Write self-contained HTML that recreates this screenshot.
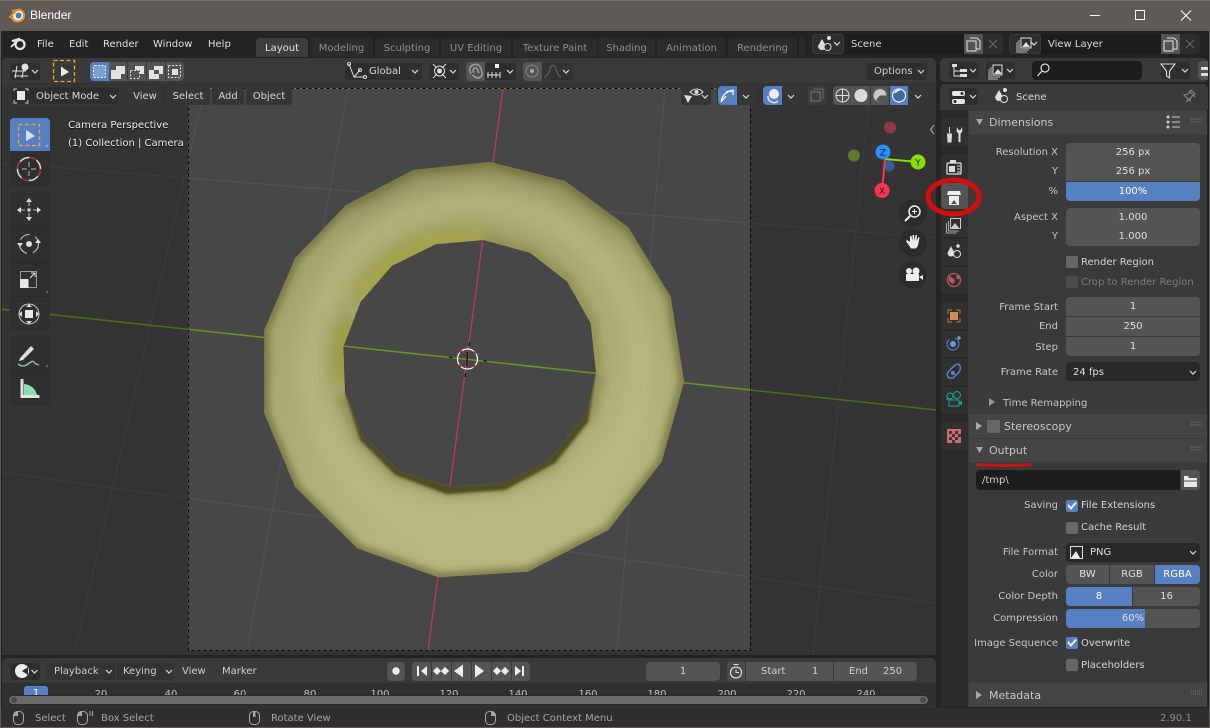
<!DOCTYPE html>
<html><head><meta charset="utf-8"><title>Blender</title>
<style>
html,body{margin:0;padding:0;background:#232323}
#r{position:relative;width:1210px;height:728px;overflow:hidden;background:#232323;font:10px/21px "DejaVu Sans",sans-serif;color:#d0d0d0}
#r div{position:absolute;white-space:nowrap;box-sizing:border-box}
svg{position:absolute;left:0;top:0}
.b{background:#2e2e2e;border-radius:4px;box-shadow:inset 0 0 0 1px #3a3a3a}
.g{background:#545454}
.blue{background:#5680c2;color:#fff}
.f{background:#545454;text-align:center;color:#e0e0e0;left:1066px;width:134px;height:19px}
.l{text-align:right;width:100px;left:958px;color:#c8c8c8}
.cb{left:1066px;width:12px;height:12px;background:#666;border-radius:2px}
.cl{left:1081px;color:#d4d4d4}
.tab{background:#2b2b2b;text-align:center;color:#8e8e8e;top:38px;height:19px;line-height:22px;border-radius:4px 4px 0 0}
.m{color:#e0e0e0}
.h{background:#363636;border-radius:3px;text-align:center;color:#d8d8d8;height:19px;top:86px;line-height:22px}
.s{top:708px;color:#a6a6a6;height:19px;line-height:21px}
.n{top:688px;color:#c0c0c0;line-height:14px;width:40px;text-align:center}
.ph{left:969px;width:238px;background:#444}
.pt{left:989px;color:#c8c8c8;font-size:11px;line-height:19px}
.tl{background:#2f2f2f;left:10px;width:40px}
.sep{left:10px;width:40px;height:1px;background:#282828}
.k{line-height:20px}
</style></head><body><div id="r">

<!-- title bar -->
<div style="left:0;top:0;width:1210px;height:31px;background:#5f5a55"></div>
<div style="left:0;top:0;width:1210px;height:1px;background:#767069"></div>
<div style="left:30px;top:6px;font:12px/19px 'Liberation Sans',sans-serif;color:#fff">Blender</div>

<!-- frame -->
<div style="left:0;top:31px;width:1px;height:697px;background:#5f5a55"></div>
<div style="left:1209px;top:31px;width:1px;height:697px;background:#5f5a55"></div>
<div style="left:0;top:727px;width:1210px;height:1px;background:#5f5a55"></div>

<!-- topbar -->
<div class="m" style="left:37px;top:34px">File</div>
<div class="m" style="left:69px;top:34px">Edit</div>
<div class="m" style="left:103px;top:34px">Render</div>
<div class="m" style="left:153px;top:34px">Window</div>
<div class="m" style="left:208px;top:34px">Help</div>
<div class="tab" style="left:256px;width:52px;background:#3d3d3d;color:#e4e4e4">Layout</div>
<div class="tab" style="left:310px;width:63px">Modeling</div>
<div class="tab" style="left:375px;width:64px">Sculpting</div>
<div class="tab" style="left:441px;width:70px">UV Editing</div>
<div class="tab" style="left:513px;width:84px">Texture Paint</div>
<div class="tab" style="left:598px;width:57px">Shading</div>
<div class="tab" style="left:657px;width:69px">Animation</div>
<div class="tab" style="left:728px;width:69px">Rendering</div>
<div class="tab" style="left:799px;width:6px"></div>

<div class="b" style="left:812px;top:34px;width:32px;height:20px"></div>
<div style="left:844px;top:34px;width:120px;height:20px;background:#1d1d1d;color:#d8d8d8;padding-left:7px;line-height:22px">Scene</div>
<div class="g" style="left:964px;top:34px;width:19px;height:20px"></div>
<div style="left:983px;top:34px;width:20px;height:20px;background:#2c2c2c;border-radius:0 4px 4px 0"></div>
<div class="b" style="left:1009px;top:34px;width:32px;height:20px"></div>
<div style="left:1041px;top:34px;width:120px;height:20px;background:#1d1d1d;color:#d8d8d8;padding-left:7px;line-height:22px">View Layer</div>
<div class="g" style="left:1161px;top:34px;width:19px;height:20px"></div>
<div style="left:1180px;top:34px;width:20px;height:20px;background:#2c2c2c;border-radius:0 4px 4px 0"></div>

<!-- viewport -->
<svg width="1210" height="728" style="z-index:0">
<defs>
<clipPath id="vp"><path d="M6 58H930a6 6 0 0 1 6 6V655H2V62a4 4 0 0 1 4-4z"/></clipPath>
<clipPath id="ring"><path clip-rule="evenodd" d="M490 162L565 181L628.3 227.3L670.7 296.7L684 381.7L661.7 461.7L608.3 530L527.7 571.7L438.3 577.3L357.3 548.3L295 486.7L264.3 413.3L264.3 330L295 258.3L346 205L413.3 170ZM483.3 240L530 252.7L567.3 281.7L590.7 323.3L596 371.7L588 410L550 460L501.7 483.3L450.7 486.7L400 471.7L363.3 436.7L345 393.3L343.3 346.7L360.7 301.7L391.7 266L435.7 244.3Z"/></clipPath>
<filter id="b2" filterUnits="userSpaceOnUse" x="200" y="100" width="560" height="560"><feGaussianBlur stdDeviation="1.2"/></filter>
<filter id="b5" filterUnits="userSpaceOnUse" x="200" y="100" width="560" height="560"><feGaussianBlur stdDeviation="4"/></filter>
<filter id="b10" filterUnits="userSpaceOnUse" x="200" y="100" width="560" height="560"><feGaussianBlur stdDeviation="11"/></filter>
<linearGradient id="tg" x1="0.35" y1="0" x2="0.6" y2="1"><stop offset="0" stop-color="#9f9f6b"/><stop offset=".5" stop-color="#abab75"/><stop offset="1" stop-color="#bbbb84"/></linearGradient>
</defs>
<g clip-path="url(#vp)">
<rect x="0" y="58" width="936" height="600" fill="#474747"/>
<g stroke="#535353" stroke-width="1" fill="none">
<path d="M348 88L247 651"/><path d="M205 88L75 651"/><path d="M665 88L617 651"/><path d="M870 88L813 655"/>
<path d="M0 163L936 238"/><path d="M0 472L936 603"/>
</g>
<path d="M0 309L936 410" stroke="#6f9322" stroke-width="1.500" fill="none"/>
<path d="M503 88L428 651" stroke="#b03c58" stroke-width="1.500" fill="none"/>
<path fill-rule="evenodd" d="M0 58H936V660H0ZM188 88V651H750V88Z" fill="#000" fill-opacity=".26"/>
<path d="M188 88.5H750" stroke="#77754a" stroke-width="1"/>
<rect x="188.5" y="88.5" width="562" height="562" fill="none" stroke="#000" stroke-width="1" stroke-dasharray="3 3"/>
<g clip-path="url(#ring)">
<rect x="250" y="150" width="450" height="440" fill="url(#tg)"/>
<path d="M346 205L413 170L490 162L565 181L628 227" fill="none" stroke="#80804e" stroke-width="20" filter="url(#b10)" opacity=".7"/>
<circle cx="476" cy="368" r="165" fill="none" stroke="#bcbc86" stroke-width="22" filter="url(#b10)" opacity=".8"/>
<path d="M350 322Q344 350 346 385" stroke="#94942a" stroke-width="22" fill="none" filter="url(#b10)" opacity=".9"/>
<path d="M360 300Q400 240 483 240" stroke="#a3a330" stroke-width="20" fill="none" filter="url(#b10)" opacity=".85"/>
<path d="M483 240L530 252.7L567.3 281.7L590.7 323.3L596 371.7" stroke="#8c8c4c" stroke-width="14" fill="none" filter="url(#b5)" opacity=".7"/>
<path d="M490 162L565 181L628.3 227.3L670.7 296.7L684 381.7L661.7 461.7L608.3 530L527.7 571.7L438.3 577.3L357.3 548.3L295 486.7L264.3 413.3L264.3 330L295 258.3L346 205L413.3 170Z" fill="none" stroke="#6c6c38" stroke-width="9" filter="url(#b5)" opacity=".85"/>
<path d="M345 393L363 437L400 472L451 487L502 483L550 460L588 410L596 372" fill="none" stroke="#85854a" stroke-width="20" filter="url(#b5)" opacity=".6"/>
<path d="M596 371.7L588.3 421.7L555 463.3L505 490L446.7 494.3L395 475L360 440L345 393.3L400 440L500 470L580 400Z" fill="#4e4e25" filter="url(#b2)"/>
</g>
<!-- 3D cursor -->
<circle cx="467.5" cy="359" r="10" fill="none" stroke="#fff" stroke-width="1.200"/>
<circle cx="467.5" cy="359" r="10" fill="none" stroke="#e0202a" stroke-width="1.400" stroke-dasharray="3 12.700" stroke-dashoffset="9"/>
<path d="M469.500 342L469 346M467.500 352L466.700 366M465.500 373L465 377M449 357.300L452.500 357.700M483.500 360.800L487 361.200" stroke="#000" stroke-width="1"/>
</g>
</svg>

<!-- viewport tool header -->
<div style="left:2px;top:58px;width:934px;height:25px;background:#3a3a3a;border-radius:5px 5px 0 0;z-index:1"></div>
<div style="z-index:2;left:0;top:0;width:1210px;height:728px">
<div class="b" style="left:9px;top:62px;width:32px;height:19px"></div>
<div class="blue" style="left:90px;top:62px;width:19px;height:19px;border-radius:4px 0 0 4px"></div>
<div class="g" style="left:109px;top:62px;width:18px;height:19px"></div>
<div class="g" style="left:128px;top:62px;width:18px;height:19px"></div>
<div class="g" style="left:147px;top:62px;width:18px;height:19px"></div>
<div class="g" style="left:166px;top:62px;width:18px;height:19px;border-radius:0 4px 4px 0"></div>
<div class="b k" style="left:344px;top:62px;width:79px;height:19px;padding-left:25px;color:#d8d8d8">Global</div>
<div class="b" style="left:428px;top:62px;width:32px;height:19px"></div>
<div class="b" style="left:466px;top:62px;width:51px;height:19px"></div>
<div class="g" style="left:466px;top:62px;width:19px;height:19px;border-radius:4px 0 0 4px"></div>
<div class="b" style="left:523px;top:62px;width:51px;height:19px;opacity:.6"></div>
<div class="g" style="left:523px;top:62px;width:19px;height:19px;border-radius:4px 0 0 4px"></div>
<div class="b k" style="left:866px;top:62px;width:62px;height:19px;padding-left:8px;color:#d0d0d0">Options</div>

<div class="b" style="left:10px;top:86px;width:110px;height:19px;padding-left:26px;color:#d8d8d8;line-height:22px">Object Mode</div>
<div class="h" style="left:127px;width:36px">View</div>
<div class="h" style="left:166px;width:44px">Select</div>
<div class="h" style="left:212px;width:32px">Add</div>
<div class="h" style="left:246px;width:46px">Object</div>
<div class="h" style="left:681px;width:30px"></div>
<div class="h" style="left:717px;width:40px"></div>
<div class="blue" style="left:718px;top:86px;width:19px;height:19px;border-radius:4px 0 0 4px"></div>
<div class="h" style="left:763px;width:39px"></div>
<div class="blue" style="left:763px;top:86px;width:19px;height:19px;border-radius:4px 0 0 4px"></div>
<div class="h" style="left:808px;width:18px;background:#3d3d3d"></div>
<div style="left:833px;top:86px;width:19px;height:19px;background:#545454;border-radius:4px 0 0 4px"></div>
<div class="g" style="left:852px;top:86px;width:18px;height:19px"></div>
<div class="g" style="left:871px;top:86px;width:18px;height:19px"></div>
<div class="blue" style="left:890px;top:86px;width:18px;height:19px"></div>
<div class="h" style="left:909px;width:19px;border-radius:0 4px 4px 0"></div>

<div style="left:68px;top:115px;color:#f0f0f0;text-shadow:0 1px 1px #000">Camera Perspective</div>
<div style="left:68px;top:133px;color:#f0f0f0;text-shadow:0 1px 1px #000">(1) Collection | Camera</div>

<!-- toolbar -->
<div style="left:10px;top:118px;width:40px;height:33px;background:#5680c2;border-radius:4px 4px 0 0"></div>
<div class="tl" style="top:151px;height:35px;border-radius:0 0 4px 4px"></div>
<div class="tl" style="top:193px;height:137px;border-radius:4px"></div>
<div class="tl" style="top:337px;height:69px;border-radius:4px"></div>
<div class="sep" style="top:227px"></div>
<div class="sep" style="top:262px"></div>
<div class="sep" style="top:296px"></div>
<div class="sep" style="top:371px"></div>

<!-- timeline -->
<div style="left:2px;top:658px;width:934px;height:25px;background:#3a3a3a;border-radius:5px 5px 0 0"></div>
<div style="left:2px;top:683px;width:934px;height:25px;background:#303030;overflow:hidden"></div>
<div class="b" style="left:9px;top:662px;width:32px;height:19px"></div>
<div class="b k" style="left:46px;top:662px;width:70px;height:19px;padding-left:8px;border-radius:4px 0 0 4px;background:#333">Playback</div>
<div class="b k" style="left:116px;top:662px;width:59px;height:19px;padding-left:7px;border-radius:0 4px 4px 0;background:#333">Keying</div>
<div class="k" style="left:182px;top:662px">View</div>
<div class="k" style="left:222px;top:662px">Marker</div>
<div class="g" style="left:387px;top:662px;width:18px;height:19px;border-radius:4px"></div>
<div class="g" style="left:412px;top:662px;width:118px;height:19px;border-radius:4px"></div>
<div class="k" style="left:646px;top:662px;width:74px;height:19px;background:#545454;border-radius:4px;text-align:center">1</div>
<div class="g" style="left:727px;top:662px;width:18px;height:19px;border-radius:4px 0 0 4px;background:#4a4a4a"></div>
<div class="g k" style="left:746px;top:662px;width:87px;height:19px;padding-left:15px">Start<span style="position:absolute;left:66px">1</span></div>
<div class="g k" style="left:834px;top:662px;width:83px;height:19px;padding-left:15px;border-radius:0 4px 4px 0">End<span style="position:absolute;left:49px">250</span></div>

<div style="left:24px;top:686px;width:24px;height:10px;background:#5680c2;border-radius:3px 3px 0 0;color:#fff;text-align:center;line-height:16px;overflow:hidden">1</div>
<div class="n" style="left:81px">20</div><div class="n" style="left:151px">40</div><div class="n" style="left:220px">60</div><div class="n" style="left:290px">80</div><div class="n" style="left:360px">100</div><div class="n" style="left:429px">120</div><div class="n" style="left:498px">140</div><div class="n" style="left:568px">160</div><div class="n" style="left:637px">180</div><div class="n" style="left:707px">200</div><div class="n" style="left:776px">220</div><div class="n" style="left:846px">240</div>
<div style="left:2px;top:695px;width:934px;height:13px;background:#303030"></div>
<div style="left:9px;top:696px;width:919px;height:8px;background:#6a6a6a;border-radius:5px;box-shadow:0 0 0 1px #2a2a2a"></div>
<div style="left:11px;top:697px;width:6px;height:6px;background:#4a4a4a;border-radius:50%"></div>
<div style="left:920px;top:697px;width:6px;height:6px;background:#4a4a4a;border-radius:50%"></div>

<!-- status -->
<div style="left:1px;top:708px;width:1208px;height:19px;background:#2e2e2e"></div>
<div class="s" style="left:35px">Select</div>
<div class="s" style="left:101px">Box Select</div>
<div class="s" style="left:271px">Rotate View</div>
<div class="s" style="left:507px">Object Context Menu</div>
<div class="s" style="left:1160px;color:#8f8f8f">2.90.1</div>

<!-- outliner header -->
<div style="left:940px;top:58px;width:268px;height:24px;background:#3a3a3a;border-radius:5px"></div>
<div class="b" style="left:948px;top:61px;width:31px;height:19px"></div>
<div class="b" style="left:985px;top:61px;width:31px;height:19px"></div>
<div style="left:1032px;top:61px;width:110px;height:19px;background:#1d1d1d;border-radius:4px"></div>
<div class="b" style="left:1160px;top:61px;width:31px;height:19px"></div>
<div style="left:1198px;top:61px;width:10px;height:19px;background:#545454;border-radius:4px 0 0 4px"></div>

<!-- properties -->
<div style="left:940px;top:84px;width:268px;height:26px;background:#3a3a3a;border-radius:5px 5px 0 0"></div>
<div class="b" style="left:948px;top:87px;width:31px;height:19px"></div>
<div style="left:1016px;top:87px;color:#d8d8d8">Scene</div>
<div style="left:941px;top:110px;width:27px;height:597px;background:#2a2a2a"></div>
<div style="left:968px;top:110px;width:239px;height:597px;background:#3a3a3a"></div>

<div class="ph" style="top:111px;height:23px"></div>
<div class="ph" style="top:414px;height:24px"></div>
<div class="ph" style="top:439px;height:23px"></div>
<div class="ph" style="top:683px;height:24px"></div>

<div class="pt" style="top:113px">Dimensions</div>
<div class="l" style="top:142px">Resolution X</div>
<div class="l" style="top:161px">Y</div>
<div class="l" style="top:181px">%</div>
<div class="f" style="top:143px;border-radius:4px 4px 0 0;line-height:20px">256 px</div>
<div class="f" style="top:162px;line-height:20px">256 px</div>
<div class="f blue" style="top:182px;border-radius:0 0 4px 4px;color:#fff;background:#5680c2;line-height:20px">100%</div>
<div class="l" style="top:207px">Aspect X</div>
<div class="l" style="top:226px">Y</div>
<div class="f" style="top:208px;border-radius:4px 4px 0 0;line-height:20px">1.000</div>
<div class="f" style="top:227px;border-radius:0 0 4px 4px;line-height:20px">1.000</div>
<div class="cb" style="top:256px"></div><div class="cl" style="top:252px">Render Region</div>
<div class="cb" style="top:276px;background:#4c4c4c"></div><div class="cl" style="top:272px;color:#7d7d7d">Crop to Render Region</div>
<div class="l" style="top:297px">Frame Start</div>
<div class="l" style="top:316px">End</div>
<div class="l" style="top:337px">Step</div>
<div class="f" style="top:297px;border-radius:4px 4px 0 0;line-height:20px">1</div>
<div class="f" style="top:316.500px;line-height:20px">250</div>
<div class="f" style="top:337px;border-radius:0 0 4px 4px;line-height:20px">1</div>
<div class="l" style="top:362px">Frame Rate</div>
<div class="f" style="top:362px;background:#282828;text-align:left;padding-left:7px;border-radius:4px;line-height:21px">24 fps</div>
<div style="left:1003px;top:393px;color:#c4c4c4">Time Remapping</div>

<div class="cb" style="left:987px;top:420px;width:13px;height:13px"></div>
<div class="pt" style="left:1004px;top:417px">Stereoscopy</div>
<div class="pt" style="top:441px">Output</div>
<div style="left:976px;top:470px;width:204px;height:20px;background:#1d1d1d;border-radius:4px 0 0 4px;padding-left:6px;line-height:21px">/tmp\</div>
<div class="g" style="left:1181px;top:470px;width:19px;height:20px;border-radius:0 4px 4px 0"></div>
<div class="l" style="top:495px">Saving</div>
<div class="cb" style="top:500px;background:#5680c2"></div><div class="cl" style="top:495px">File Extensions</div>
<div class="cb" style="top:522px"></div><div class="cl" style="top:517px">Cache Result</div>
<div class="l" style="top:542px">File Format</div>
<div class="f" style="top:543px;background:#282828;text-align:left;padding-left:24px;border-radius:4px;line-height:20px">PNG</div>
<div class="l" style="top:564px">Color</div>
<div class="f" style="top:565px;width:43px;border-radius:4px 0 0 4px;line-height:19px">BW</div>
<div class="f" style="top:565px;left:1110px;width:44px;line-height:19px">RGB</div>
<div class="f" style="top:565px;left:1155px;width:45px;background:#5680c2;color:#fff;border-radius:0 4px 4px 0;line-height:19px">RGBA</div>
<div class="l" style="top:586px">Color Depth</div>
<div class="f" style="top:587px;width:66px;background:#5680c2;color:#fff;border-radius:4px 0 0 4px;line-height:19px">8</div>
<div class="f" style="top:587px;left:1133px;width:67px;border-radius:0 4px 4px 0;line-height:19px">16</div>
<div class="l" style="top:608px">Compression</div>
<div class="f" style="top:609px;border-radius:4px;background:linear-gradient(90deg,#5680c2 59%,#545454 59%);line-height:19px">60%</div>
<div class="l" style="top:633px">Image Sequence</div>
<div class="cb" style="top:637px;background:#5680c2"></div><div class="cl" style="top:633px">Overwrite</div>
<div class="cb" style="top:659px"></div><div class="cl" style="top:655px">Placeholders</div>
<div class="pt" style="top:686px">Metadata</div>

<!-- prop tabs -->
<div style="left:941px;top:119px;width:27px;height:26px;background:#303030;border-radius:4px 0 0 4px"></div>
<div style="left:941px;top:155px;width:27px;height:26px;background:#303030;border-radius:4px 0 0 4px"></div>
<div style="left:941px;top:183px;width:27px;height:26px;background:#545454;border-radius:4px 0 0 4px"></div>
<div style="left:941px;top:211px;width:27px;height:26px;background:#303030"></div>
<div style="left:941px;top:239px;width:27px;height:26px;background:#303030"></div>
<div style="left:941px;top:267px;width:27px;height:26px;background:#303030"></div>
<div style="left:941px;top:303px;width:27px;height:26px;background:#303030"></div>
<div style="left:941px;top:331px;width:27px;height:26px;background:#303030"></div>
<div style="left:941px;top:359px;width:27px;height:26px;background:#303030"></div>
<div style="left:941px;top:387px;width:27px;height:26px;background:#303030"></div>
<div style="left:941px;top:423px;width:27px;height:26px;background:#303030"></div>
</div>

<!-- icons -->
<svg width="1210" height="728" style="z-index:3;pointer-events:none">
<!-- title logo -->
<circle cx="18.5" cy="15.5" r="5.5" fill="#f5f5f5"/><circle cx="18.5" cy="15.5" r="3" fill="#3f7fc8"/>
<path d="M10 17L16 11L12 11L20 9.5C23 11 24.5 14 24 17C23 20 20 21.5 17 21.5C14.5 21.5 13 20 12.5 18Z" fill="none" stroke="#f08a1d" stroke-width="2"/>
<!-- window buttons -->
<path d="M1090 15.5H1100" stroke="#fff"/><rect x="1135.5" y="10.5" width="9" height="9" fill="none" stroke="#fff"/><path d="M1181 10.5L1191 20.5M1191 10.5L1181 20.5" stroke="#fff"/>
<!-- top bar logo -->
<circle cx="20" cy="44.5" r="4.5" fill="none" stroke="#e6e6e6" stroke-width="2.2"/><path d="M11 47L17 41H12L20 38.5" fill="none" stroke="#e6e6e6" stroke-width="1.8"/>
<!-- scene icons -->
<g fill="#dcdcdc"><path d="M822 39L826 46A4 4 0 1 1 818 46Z"/><circle cx="829" cy="38" r="2"/></g><circle cx="827.500" cy="47" r="3.500" fill="#2e2e2e" stroke="#dcdcdc"/>
<path d="M834 42l3 3 3-3" fill="none" stroke="#ddd" stroke-width="1.200"/>
<g fill="none" stroke="#ddd"><rect x="1021" y="38" width="10" height="10"/><path d="M1019 40v10h10M1017 42v10h10" stroke="#bbb"/></g><path d="M1022 47l4-5 4 5z" fill="#ddd"/>
<path d="M1031 42l3 3 3-3" fill="none" stroke="#ddd" stroke-width="1.200"/>
<g fill="none" stroke="#e4e4e4"><path d="M970 38h7l3 3v8h-5"/><rect x="967" y="41" width="9" height="10" fill="#545454"/><path d="M1167 38h7l3 3v8h-5"/><rect x="1164" y="41" width="9" height="10" fill="#545454"/></g>
<path d="M989 40l8 8M997 40l-8 8M1186 40l8 8M1194 40l-8 8" stroke="#666" stroke-width="1.200"/>
<!-- editor btn viewport -->
<g stroke="#e0e0e0" fill="none"><path d="M12 71h14M14 76h14M17 66l-2 12M24 66l-2 12"/></g><circle cx="25" cy="67" r="3.500" fill="#e0e0e0"/>
<path d="M32 70l3 3 3-3" fill="none" stroke="#ddd" stroke-width="1.200"/>
<rect x="53.500" y="60.500" width="21" height="21" fill="none" stroke="#f2a32b" stroke-dasharray="4 2.500" stroke-width="1.300"/>
<path d="M61 66.500L69 72L61 76.500Z" fill="#ececec"/>
<rect x="93.500" y="65.500" width="12" height="12" rx="1" fill="#7e9fd4" stroke="#fff" stroke-dasharray="2 1.500"/>
<path d="M111 70h5v-4h9v8h-4v5h-10z" fill="#e2e2e2"/>
<path d="M130.500 70.500h9v8h-9z" fill="none" stroke="#ddd" stroke-dasharray="2 1.500"/><path d="M135 66h9v8h-4v-4h-5z" fill="#e2e2e2"/>
<path d="M149 70h5v-4h9v8h-4v5h-10z" fill="#e2e2e2"/><rect x="154" y="70" width="5" height="4" fill="#545454"/>
<rect x="168.500" y="65.500" width="12" height="12" fill="none" stroke="#ddd" stroke-dasharray="2 1.500"/><rect x="172" y="69" width="6" height="6" fill="#e2e2e2"/>
<!-- global -->
<g fill="none" stroke="#dcdcdc"><path d="M349 64l5 13h10M354 77l6-7"/><circle cx="349" cy="64" r="1.500"/><circle cx="365" cy="77" r="1.500"/><circle cx="360" cy="70" r="1.500"/></g>
<path d="M412 70l3 3 3-3M450 70l3 3 3-3M507 70l3 3 3-3M563 70l3 3 3-3" fill="none" stroke="#ddd" stroke-width="1.200"/>
<g fill="none" stroke="#dcdcdc"><circle cx="439.500" cy="71" r="5"/><path d="M433 64l4 4M446 64l-4 4M433 78l4-4M446 78l-4-4"/></g><circle cx="439.500" cy="71" r="2.500" fill="#ddd"/>
<path d="M471 74L469.500 70A6 6 0 0 1 480 66.500L482 72A4.500 4.500 0 0 1 475 77L472.500 75M474 72.500A2.500 2.500 0 0 1 477 68.500L479 73" fill="none" stroke="#a0a0a0" stroke-width="1.500"/>
<path d="M487 75h13M488 72v6M492 72v6M496 72v6M500 72v6" stroke="#ddd"/><rect x="495" y="64" width="4" height="4" fill="#eee"/>
<circle cx="532" cy="71" r="6" fill="none" stroke="#888"/><circle cx="532" cy="71" r="2" fill="#aaa"/>
<path d="M544 77C549 77 550 65 553 65C556 65 557 77 561 77" fill="none" stroke="#666"/>
<path d="M918 70l3 3 3-3" fill="none" stroke="#ddd" stroke-width="1.200"/>
<!-- mode icon -->
<path d="M14 91v-2h3M25 89h3v2M28 100v3h-3M17 103h-3v-3" fill="none" stroke="#ccc"/><rect x="17" y="91" width="8" height="9" fill="#e8e8e8"/>
<path d="M110 95l3 3 3-3" fill="none" stroke="#ddd" stroke-width="1.200"/>
<!-- eye -->
<path d="M690 92q7-6 13 0q-6 6-13 0z" fill="none" stroke="#ddd"/><circle cx="696.500" cy="92" r="2" fill="#ddd"/><path d="M684 95l8 1-4 7z" fill="#ddd"/>
<path d="M702 95l3 3 3-3M743 95l3 3 3-3M788 95l3 3 3-3M915 95l3 3 3-3" fill="none" stroke="#ddd" stroke-width="1.200"/>
<!-- gizmo icon -->
<path d="M721 102q2-11 12-11M726 92l7-2v5M721 102l5-6" fill="none" stroke="#fff" stroke-width="1.200"/>
<circle cx="774" cy="94" r="5" fill="#eee"/><path d="M768 96a6 6 0 0 0 10 5" fill="none" stroke="#eee" stroke-width="1.400"/>
<rect x="811" y="92" width="9" height="9" fill="none" stroke="#777"/><path d="M814 92v-3h9v9h-3" fill="none" stroke="#666"/>
<circle cx="842.500" cy="95.500" r="6.500" fill="none" stroke="#ddd"/><path d="M836 95.500h13M842.500 89v13" stroke="#ddd"/>
<circle cx="861" cy="95.500" r="6.500" fill="#dcdcdc"/>
<circle cx="880" cy="95.500" r="6.500" fill="#c8c8c8"/><path d="M880 95.500L886.500 95.500A6.500 6.500 0 0 1 880 102A6 6 0 0 1 876 100Z" fill="#545454"/>
<circle cx="899" cy="95.500" r="6.500" fill="#3f6aa8" stroke="#eee" stroke-width="1.200"/><path d="M895 93q2-3 5-3" stroke="#fff" fill="none" stroke-width="1.500"/>
<!-- outliner icons -->
<g fill="#ddd"><rect x="952" y="64" width="5" height="3"/><rect x="960" y="69" width="7" height="3"/><rect x="960" y="74" width="7" height="3"/></g><path d="M954 67v9h6M954 71h6" fill="none" stroke="#ddd"/>
<path d="M970 69l3 3 3-3M1007 69l3 3 3-3M1182 69l3 3 3-3M970 95l3 3 3-3" fill="none" stroke="#ddd" stroke-width="1.200"/>
<g fill="none" stroke="#ddd"><rect x="993" y="65" width="9" height="10"/><path d="M991 67v10h9M989 69v10h9" stroke="#bbb"/></g><path d="M994 74l4-5 4 5z" fill="#ddd"/>
<circle cx="1045" cy="68" r="4" fill="none" stroke="#ddd" stroke-width="1.200"/><path d="M1042 71l-4.500 5" stroke="#ddd" stroke-width="1.300"/>
<path d="M1161 64h14l-5.500 7v7l-3-2v-5z" fill="none" stroke="#ddd" stroke-width="1.100"/>
<g fill="#ddd"><rect x="1201" y="67" width="7" height="3"/><rect x="1201" y="73" width="7" height="3"/></g>
<!-- prop header -->
<rect x="952" y="91" width="13" height="5" rx="2" fill="#e6e6e6"/><rect x="952" y="99" width="13" height="5" rx="2" fill="#e6e6e6"/><circle cx="962" cy="93.500" r="1.500" fill="#2e2e2e"/><circle cx="955" cy="101.500" r="1.500" fill="#2e2e2e"/>
<g fill="#e0e0e0"><path d="M999 90L1003 97A4 4 0 1 1 995 97Z"/><circle cx="1005" cy="90" r="2"/></g><circle cx="1004" cy="99" r="3.500" fill="#3a3a3a" stroke="#e0e0e0"/>
<path d="M1186 102l4-4M1189 91l6 6M1191 90l-3 4-4 1 6 6 1-4 4-3z" fill="none" stroke="#8a8a8a"/>
<!-- panel headers -->
<path d="M976 119h7l-3.500 6z" fill="#aaa"/>
<path d="M989 398v8l6-4z" fill="#999"/>
<path d="M976 422v8l6-4z" fill="#aaa"/>
<path d="M976 447h7l-3.500 6z" fill="#aaa"/>
<path d="M976 691v8l6-4z" fill="#aaa"/>
<g fill="#ccc"><circle cx="1168" cy="117" r="1.500"/><circle cx="1168" cy="122" r="1.500"/><circle cx="1168" cy="127" r="1.500"/></g><path d="M1172 117h8M1172 122h8M1172 127h8" stroke="#ccc"/>
<g stroke="#777" stroke-dasharray="1 1"><path d="M1191 119h11M1191 122h11M1191 422h11M1191 425h11M1191 447h11M1191 450h11M1191 691h11M1191 694h11"/></g>
<!-- check marks -->
<path d="M1068 505l3 3.500 5-6M1068 642l3 3.500 5-6" fill="none" stroke="#fff" stroke-width="1.800"/>
<!-- dropdown arrows -->
<path d="M1190 371l3 3 3-3M1190 551l3 3 3-3" fill="none" stroke="#ddd" stroke-width="1.200"/>
<rect x="1070.500" y="546.500" width="12" height="12" fill="none" stroke="#ddd"/><path d="M1071 558l5-7 4 7z" fill="#eee"/>
<path d="M1184 476h4l1 2h8v9h-13z" fill="#e8e8e8"/><path d="M1184 481h13" stroke="#545454"/>
<!-- red marks -->
<ellipse cx="953.500" cy="197" rx="25.500" ry="17" fill="none" stroke="#d40e0e" stroke-width="5"/>
<path d="M976 463Q1005 465 1031 463L1032 466Q1005 468 976 466Z" fill="#c91212"/>
<!-- gizmo -->
<circle cx="890" cy="127.500" r="6" fill="#8a3a4c"/>
<circle cx="854" cy="155.500" r="6" fill="#5e7a2a"/>
<circle cx="889" cy="166" r="5.500" fill="#355c94"/>
<path d="M885 159L882 191" stroke="#ff3352" stroke-width="2"/><path d="M885 159L918 162" stroke="#8bdc00" stroke-width="2"/>
<circle cx="883" cy="152" r="7.500" fill="#2890ff"/><circle cx="918" cy="162" r="7.500" fill="#8bdc00"/><circle cx="882" cy="190.500" r="7.500" fill="#ff3352"/>
<g font-family="DejaVu Sans,sans-serif" font-size="9" text-anchor="middle" fill="#1d1d1d"><text x="883" y="155.500">Z</text><text x="918" y="165.500">Y</text><text x="882" y="194">X</text></g>
<circle cx="913" cy="213" r="14" fill="#2c2c2c"/><circle cx="913" cy="243" r="14" fill="#2c2c2c"/><circle cx="913" cy="275" r="14" fill="#2c2c2c"/>
<circle cx="914.500" cy="211.500" r="5.500" fill="none" stroke="#eee" stroke-width="1.500"/><path d="M914.500 209v5M912 211.500h5" stroke="#eee"/><path d="M905 221l5-5" stroke="#eee" stroke-width="2"/>
<path d="M908 244l-2-3 1-1 3 2v-6l1.500 0 1 5v-6h1.500l.5 6 1-6h1.500l-.5 6 2-4 1 .5-1.500 8-2 3h-5z" fill="#eee"/>
<circle cx="909" cy="271" r="3" fill="#eee"/><circle cx="916" cy="271" r="3.500" fill="#eee"/><rect x="906" y="274" width="13" height="7" rx="1" fill="#eee"/><path d="M919 277l4-2v5z" fill="#eee"/>
<path d="M934 125l-3.500 4.500 3.500 4.500" fill="none" stroke="#aaa" stroke-width="1.100"/>
<!-- toolbar icons -->
<rect x="18.500" y="124.500" width="21" height="21" fill="none" stroke="#f2a32b" stroke-dasharray="4 2.500" stroke-width="1.300"/>
<path d="M26 130L35 136L26 141Z" fill="#d9e2f2"/>
<path d="M45 147l3-3v3z" fill="#8facd8"/>
<circle cx="29" cy="169" r="11.500" fill="none" stroke="#ddd" stroke-width="1.500"/><circle cx="29" cy="169" r="11.500" fill="none" stroke="#8e2f35" stroke-width="1.600" stroke-dasharray="8 10"/>
<path d="M29 162v5M29 171v5M22 169h5M31 169h5" stroke="#888" stroke-width="1.500"/>
<g fill="#ddd"><path d="M29 198l3 4h-6zM29 221l3-4h-6zM17 210l4-3v6zM41 210l-4-3v6z"/></g><path d="M29 202v4M29 213v4M21 210h4M33 210h4" stroke="#bbb"/><rect x="27.500" y="208.500" width="3" height="3" fill="#ddd"/>
<circle cx="29" cy="244" r="9.500" fill="none" stroke="#ccc" stroke-dasharray="11 6"/><circle cx="29" cy="244" r="3" fill="#ddd"/><path d="M17 243h6l-3 4zM35 243h6l-3-4z" fill="#ddd"/>
<rect x="20.500" y="271.500" width="16" height="16" fill="none" stroke="#999"/><rect x="20" y="279" width="8.500" height="9" fill="#e6e6e6"/><path d="M30 278l5-5M31 273h4v4" stroke="#ddd" fill="none"/>
<path d="M45 293l3-3v3zM45 367l3-3v3z" fill="#666"/>
<circle cx="29" cy="314" r="10" fill="none" stroke="#ccc"/><rect x="25" y="310" width="8" height="8" fill="#e8e8e8"/><g fill="#ddd"><path d="M29 304l3 3h-6zM29 324l3-3h-6zM19 314l3-3v6zM39 314l-3-3v6z"/></g>
<path d="M20 358l11-12 3 3-11 11-4 1z" fill="#ddd"/>
<path d="M18 364q5 4 10 0t6-2 5 3" fill="none" stroke="#8fd0a8" stroke-width="1.300"/>
<path d="M20.500 379h3v16h16v3h-19z" fill="#e0e0e0"/><path d="M24 395v-11a14 14 0 0 1 13 11z" fill="#8fdcb0"/>
<!-- prop tab icons -->
<path d="M957 127l-.5 4 2 3v8h2v-8l2-3-.5-4-1.500 3h-2z" fill="#ddd"/><path d="M949.500 127v6M947.500 134h4l-.5 8h-3z" stroke="#ddd" fill="#ddd"/>
<rect x="947" y="163" width="14" height="11" rx="1" fill="none" stroke="#ddd" stroke-width="1.300"/><rect x="950" y="160" width="6" height="3" fill="#ddd"/><rect x="949" y="166" width="6" height="6" fill="#ddd"/><path d="M957 166h3M957 169h3M957 172h3" stroke="#ddd"/>
<path d="M948 191h12l1 4h-14z" fill="#eee"/><rect x="949" y="196" width="10" height="9" fill="#eee"/><path d="M951 204l3-4 3 4z" fill="#555"/>
<rect x="950.500" y="218.500" width="10" height="10" fill="none" stroke="#ccc"/><path d="M948.500 221v10h10M946.500 223v10h10" fill="none" stroke="#aaa"/><path d="M951 228l4-5 4 5z" fill="#ccc"/>
<path d="M951 246l3.500 7a3.500 3.500 0 1 1-7 0z" fill="#ddd"/><circle cx="958" cy="246" r="1.800" fill="#ddd"/><circle cx="957" cy="254" r="3.500" fill="#303030" stroke="#ddd"/>
<circle cx="954" cy="280" r="6.500" fill="#303030" stroke="#c05858" stroke-width="1.300"/><path d="M949 276l4 2 2 3-2 3-4-3zM957 275l3 3-2 2-2-3z" fill="#c05858"/>
<rect x="950" y="312" width="8" height="8" fill="#cf8c55"/><path d="M948 314v-4h4M956 310h4v4M960 318v4h-4M952 322h-4v-4" fill="none" stroke="#b77a45"/>
<circle cx="953" cy="344" r="6" fill="none" stroke="#5b8ad0" stroke-dasharray="24 6"/><circle cx="953" cy="344" r="3" fill="#6a99e0"/><circle cx="959" cy="338" r="1.700" fill="#6a99e0"/>
<path d="M948 377q-2-3 1-6l6-6q4-2 5 1t-1 6l-6 6q-3 1-5-1z" fill="none" stroke="#5b8ad0" stroke-width="1.400"/><circle cx="953" cy="373" r="2" fill="#5b8ad0"/>
<circle cx="950" cy="396" r="3" fill="none" stroke="#1aa883"/><circle cx="957" cy="395" r="3.500" fill="none" stroke="#1aa883"/><rect x="949" y="400" width="10" height="6" fill="none" stroke="#1aa883"/><path d="M959 402l3-1v4l-3-1z" fill="#1aa883"/><path d="M946 399h3" stroke="#1aa883"/>
<rect x="947" y="429" width="14" height="14" fill="#cc6a78"/><g fill="#3a3a3a"><rect x="949" y="431" width="3" height="3"/><rect x="955" y="431" width="3" height="3"/><rect x="952" y="434" width="3" height="3"/><rect x="958" y="434" width="3" height="3"/><rect x="949" y="437" width="3" height="3"/><rect x="955" y="437" width="3" height="3"/><rect x="952" y="440" width="3" height="3"/></g>
<!-- timeline icons -->
<circle cx="22" cy="671" r="7" fill="#eee"/><path d="M22 671l6-4v8z" fill="#2e2e2e"/><path d="M31.500 670l3 3 3-3" fill="none" stroke="#ddd" stroke-width="1.200"/>
<path d="M106 670l3 3 3-3M166 670l3 3 3-3" fill="none" stroke="#ddd" stroke-width="1.200"/>
<circle cx="396" cy="671" r="3.700" fill="#eee"/>
<g fill="#eee"><rect x="417" y="666" width="2" height="10"/><path d="M421 671l6-5v10z"/><path d="M433 671l4-4 4 4-4 4zM441 671l4-4 4 4-4 4z"/><path d="M454 671l9-6.500v13z"/><path d="M475 664.500l9 6.500-9 6.500z"/><path d="M493 671l4-4 4 4-4 4zM501 671l4-4 4 4-4 4z"/><path d="M515 666l6 5-6 5z"/><rect x="522" y="666" width="2" height="10"/></g>
<g stroke="#3a3a3a"><path d="M431.500 662v19M451.500 662v19M471.500 662v19M491.500 662v19M511.500 662v19"/></g>
<circle cx="736" cy="672.500" r="5.500" fill="none" stroke="#ddd" stroke-width="1.200"/><path d="M736 669.500v3h3M733.500 664.500h5" stroke="#ddd" fill="none"/>
<!-- status mouse icons -->
<g fill="none" stroke="#a6a6a6"><rect x="13.500" y="711.500" width="10" height="13" rx="4"/><rect x="77.500" y="711.500" width="10" height="13" rx="4"/><rect x="249.500" y="711.500" width="10" height="13" rx="4"/><rect x="485.500" y="711.500" width="10" height="13" rx="4"/><path d="M90 711v5M92.500 711v5"/></g>
<path d="M14 716v-2a4 4 0 0 1 4-3v5zM78 716v-2a4 4 0 0 1 4-3v5zM491 711a4 4 0 0 1 4 3v2h-4z" fill="#a6a6a6"/><rect x="253" y="712" width="2.500" height="5" fill="#a6a6a6"/>
</svg>
</div></body></html>
